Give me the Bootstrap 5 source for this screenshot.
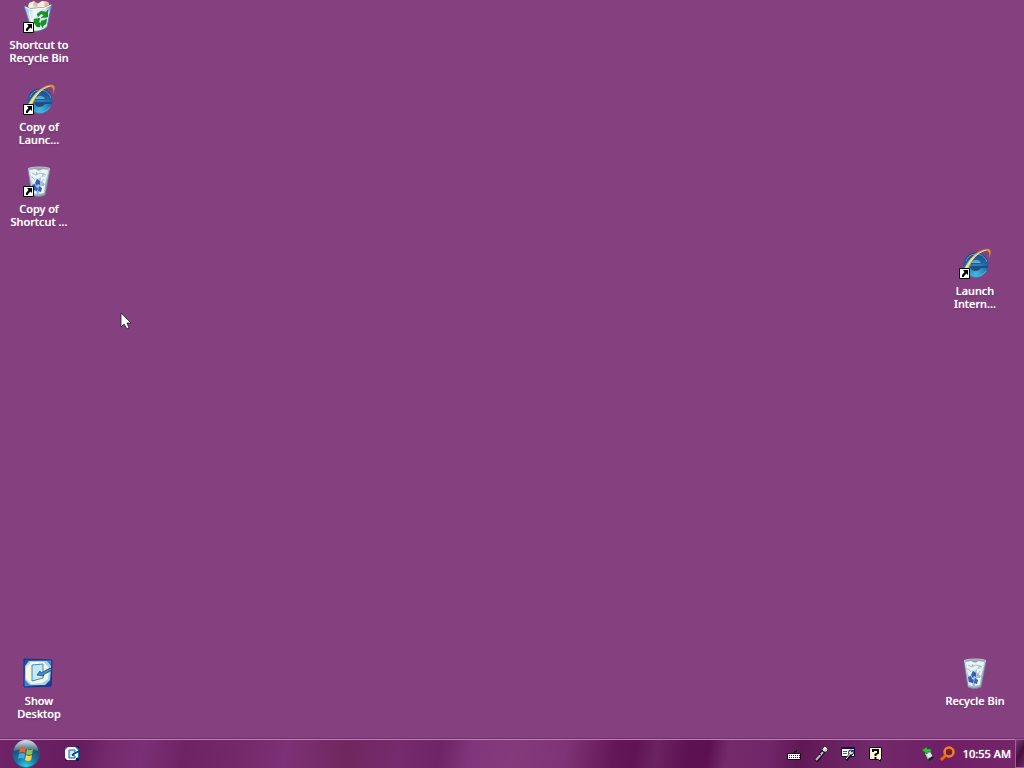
<!DOCTYPE html>
<html lang="en">
<head>
<meta charset="utf-8">
<meta name="viewport" content="width=device-width, initial-scale=1">
<title>Desktop</title>
<link href="https://cdn.jsdelivr.net/npm/bootstrap@5.3.0/dist/css/bootstrap.min.css" rel="stylesheet">
<style>
body { background: #85417f; font-family: "Noto Sans", "Open Sans", sans-serif; font-size: 11px; line-height: 13px; color: #fff; }
.desktop { display: grid; grid-template-columns: 78px 1fr 78px; grid-template-rows: repeat(9, minmax(0, 1fr)); padding-right: 10px; }
.shortcut { color: #fff; font-size: 11px; line-height: 13px; font-weight: 500; text-shadow: 0 0 1px #e8d5e8, 0 1px 2px #5b245b; }
.shortcut svg { width: 40px; height: 36px; }
.shortcut span { margin-top: 2px; }
.row-4 { grid-row: 4; }
.row-9 { grid-row: 9; }
.col-first { grid-column: 1; }
.col-last { grid-column: 3; }
.taskbar { height: 30px; border-top: 1px solid #713069; box-shadow: inset 0 1px #b981b6;
  background: linear-gradient(100deg, #702367 0%, #651d5e 8%, #762b6e 11%, #7a3075 14%, #6e2464 18%, #732869 23%, #7d3176 28%, #70275f 34%, #752b6d 39%, #6e2566 43%, #80367a 46%, #843b7c 50%, #7e3476 55%, #641758 60%, #601455 62%, #6b2362 64%, #5d1253 67%, #5c1052 69%, #742b6b 71%, #702668 75%, #601855 78%, #732a6c 85%, #701e66 92%, #742769 100%); }
.tray { gap: 11px; margin-right: 38px; }
.clock { text-shadow: 0 0 1px #e8d5e8; }
.peek { width: 9px; border: 1px solid #95658f; border-right: 0; background: linear-gradient(120deg, #793c73, #45103f 50%, #6b2662); }
.pointer { left: 120px; top: 312px; }
</style>
</head>
<body class="vh-100 d-flex flex-column overflow-hidden">

<svg width="0" height="0" class="position-absolute" aria-hidden="true">
  <defs>
    <linearGradient id="glass" x1="0" y1="0" x2="1" y2="1"><stop offset="0" stop-color="#d4e2e8"/><stop offset=".5" stop-color="#b4c9d8"/><stop offset="1" stop-color="#8496ac"/></linearGradient>
    <linearGradient id="binblue" x1="0" x2="1"><stop offset="0" stop-color="#8fb9d3"/><stop offset=".35" stop-color="#edf7f6"/><stop offset=".75" stop-color="#d6ebf1"/><stop offset="1" stop-color="#6687b8"/></linearGradient>
    <radialGradient id="globe" cx=".5" cy=".85" r=".9"><stop offset="0" stop-color="#42b9dd"/><stop offset=".5" stop-color="#2174b1"/><stop offset="1" stop-color="#173e79"/></radialGradient>
    <linearGradient id="gold" x1="0" y1="1" x2="1" y2="0"><stop offset="0" stop-color="#f5d35a"/><stop offset=".5" stop-color="#ecd287"/><stop offset="1" stop-color="#d88b2c"/></linearGradient>
    <radialGradient id="orb" cx=".5" cy="1" r="1"><stop offset="0" stop-color="#37dbef"/><stop offset=".4" stop-color="#137b9f"/><stop offset=".75" stop-color="#244d72"/><stop offset="1" stop-color="#6688a2"/></radialGradient>
    <linearGradient id="shine" x1="0" y1="0" x2="0" y2="1"><stop offset="0" stop-color="#dce4ec"/><stop offset="1" stop-color="#8da3b5" stop-opacity=".35"/></linearGradient>
    <linearGradient id="pad" x1="0" y1="0" x2="1" y2="1"><stop offset="0" stop-color="#1948a1"/><stop offset=".5" stop-color="#3f88d8"/><stop offset="1" stop-color="#102d87"/></linearGradient>
    <symbol id="arrow" viewBox="0 0 11 11">
      <path fill="#fff" stroke="#000" d="M.5.5h10v10H.5z"/>
      <path d="M4 2h5v5L7.500 5.500 5 8v1H3V7l2.500-3z"/>
    </symbol>
    <symbol id="bin" viewBox="0 0 40 36">
      <path fill="url(#glass)" stroke="#71849c" stroke-width=".7" d="M9 5l4 26q7 3 13 0l5-26z"/>
      <ellipse cx="20" cy="5" rx="11" ry="2" fill="#98a8b0" stroke="#c6d4da" stroke-width=".8"/>
      <path fill="#eaf3f5" d="M11 6l5-1 4 2 4-2 5 1-1 7-4-2-5 4-7-3zM12 14l4-1 2 5-4 2zM22 13l6-1-2 8-4-3zM20 23l6-2-1 8-5 1zM13 26l4 1 1 3-4-1z"/>
      <path stroke="#8fa6b8" stroke-width=".7" fill="none" d="M13 9l4 2 4-2 6 2M25 15l-3 4 3 3M13 13l3 3"/>
      <path fill="#9bbdd1" d="M17 8l2 1-2 2zM24 9l2 1-3 2zM20 16l2 2-3 1z"/>
      <path fill="#305fbb" d="M16 19l2-4 3 2v4l-2-1-1 2zM13 21l3-1 1 3 2 1-1 3-4-1zM20 22l3 2-1 4-3-1z"/>
    </symbol>
    <symbol id="binfull" viewBox="0 0 40 36">
      <path fill="#f8f0df" d="M9 7l1-4 5-2 3 3 5-3 6 1 2 6-19 2z"/>
      <path fill="#eab99c" d="M15 2l4 1-1 4-4-1zM26 1l4 2-2 5-3-2z"/>
      <path fill="url(#binblue)" stroke="#547aa9" stroke-width=".7" d="M5 6q6 4 12 2 9 1 16-4l-5 23q-6 5-15 4z"/>
      <path fill="none" stroke="#fff" d="M6 7q6 4 12 2 9 0 14-4M10 11l4 16M30 11l-3 15"/>
      <path fill="#169522" stroke="#087018" stroke-width=".3" d="M18 14l4-3 5 1 2-2v7l-7 1 3-3-3-1-3 3zM15 19l6-1-1 4 1 1v4h-3l-3-4zM23 21l5-2-1 5-3 2v2l-3-4 2-4z"/>
    </symbol>
    <symbol id="ie" viewBox="0 0 40 36">
      <circle cx="21" cy="19" r="12.500" fill="url(#globe)"/>
      <path fill="#315797" d="M14 17c1-6 12-7 14-1l-1 2H14z"/>
      <path fill="#56aed6" d="M16 17c1-4 9-4 10 0z"/>
      <path fill="#234c83" d="M15 20h18v2h-7q-2 3-6 3-4 0-5-5z"/>
      <path fill="none" stroke="#5bb9df" stroke-width=".8" d="M11 15c3-9 17-10 21 1M12 24c4 8 14 8 19 1"/>
      <path fill="url(#gold)" stroke="#a87631" stroke-width=".3" d="M6 32C8 21 18 5 31 3c5-1 6 3 3 9 1-5 0-8-5-7C20 7 12 22 12 29z"/>
      <path fill="none" stroke="#fff1b4" stroke-width=".8" d="M8 28C13 17 21 7 31 4"/>
    </symbol>
    <symbol id="showdesk" viewBox="0 0 30 30">
      <path fill="url(#pad)" stroke="#122d80" d="M1 1l28 1-1 26-27 1z"/>
      <path fill="#a9d2ef" d="M6 3h18l4 5-1 14-5 5H7l-5-5V8z"/>
      <path fill="#f7f8df" d="M8 4h13l5 6-1 11-6 4-11 1-5-5V9z"/>
      <path fill="#c7e8f7" stroke="#3d8cc8" d="M9 7l11-1v14l-11 3z"/>
      <path fill="#3c93cd" stroke="#183d64" stroke-width=".7" d="M14 17l3-4 1 2 9-5 2 2-9 5 1 1z"/>
    </symbol>
  </defs>
</svg>

<main class="desktop flex-fill position-relative">
  <button class="shortcut btn p-0 border-0 rounded-0 d-flex flex-column align-items-center col-first">
    <svg viewBox="0 0 40 36" aria-hidden="true"><use href="#binfull"/><use href="#arrow" x="4" y="22" width="11" height="11"/></svg>
    <span>Shortcut to<br>Recycle Bin</span>
  </button>
  <button class="shortcut btn p-0 border-0 rounded-0 d-flex flex-column align-items-center col-first">
    <svg viewBox="0 0 40 36" aria-hidden="true"><use href="#ie"/><use href="#arrow" x="4" y="22" width="11" height="11"/></svg>
    <span>Copy of<br>Launc...</span>
  </button>
  <button class="shortcut btn p-0 border-0 rounded-0 d-flex flex-column align-items-center col-first">
    <svg viewBox="0 0 40 36" aria-hidden="true"><use href="#bin"/><use href="#arrow" x="4" y="22" width="11" height="11"/></svg>
    <span>Copy of<br>Shortcut ...</span>
  </button>
  <button class="shortcut btn p-0 border-0 rounded-0 d-flex flex-column align-items-center row-4 col-last">
    <svg viewBox="0 0 40 36" aria-hidden="true"><use href="#ie"/><use href="#arrow" x="4" y="22" width="11" height="11"/></svg>
    <span>Launch<br>Intern...</span>
  </button>
  <button class="shortcut btn p-0 border-0 rounded-0 d-flex flex-column align-items-center row-9 col-first">
    <svg viewBox="0 0 40 36" aria-hidden="true"><use href="#showdesk" x="4" y="2" width="30" height="30"/></svg>
    <span>Show<br>Desktop</span>
  </button>
  <button class="shortcut btn p-0 border-0 rounded-0 d-flex flex-column align-items-center row-9 col-last">
    <svg viewBox="0 0 40 36" aria-hidden="true"><use href="#bin"/></svg>
    <span>Recycle Bin</span>
  </button>
  <svg class="pointer position-absolute" width="12" height="19" viewBox="0 0 12 19" aria-hidden="true"><path fill="#fff" stroke="#251537" stroke-width=".8" d="M1 1v14l3-3 3 5 2-1-2-5h4z"/></svg>
</main>

<footer class="taskbar d-flex align-items-center flex-shrink-0">
  <button class="btn p-0 border-0 d-flex ms-2 ps-1" aria-label="Start">
    <svg width="28" height="28" viewBox="0 0 28 28">
      <circle cx="14" cy="14" r="13.500" fill="url(#orb)" stroke="#304f71" stroke-width=".6"/>
      <path fill="url(#shine)" d="M2 11a12 11 0 0 1 24 0q-12-4-24 0z"/>
      <path fill="#e76424" d="M8 8q3-2 6 0l-1 5q-3-2-6 0z"/>
      <path fill="#8fc348" d="M15 9q3 2 6 0l-1 5q-3 2-6 0z"/>
      <path fill="#4ba6e5" d="M7 14q3-2 6 0l-1 5q-3-2-6 0z"/>
      <path fill="#ffd44b" d="M14 15q3 2 6 0l-1 5q-3 2-6 0z"/>
    </svg>
  </button>
  <button class="btn p-0 border-0 d-flex ms-4" aria-label="Show Desktop">
    <svg width="16" height="16" viewBox="0 0 16 16">
      <path fill="#1670bd" d="M1 2l2-1h12v13H1z"/>
      <path fill="#fff" d="M4 1h7l3 3v7l-3 3H3l-2-2V4z"/>
      <path fill="#c6eaff" stroke="#0b62a4" d="M5 4h6v3L8 9l3 1v2H5z"/>
      <path stroke="#123d66" stroke-width="1.500" d="M8 9l7-4"/>
      <path fill="#10204b" d="M12 0h3v3zM12 12h3v3h-3zM1 12l2 3H1z"/>
    </svg>
  </button>
  <div class="tray d-flex align-items-center ms-auto">
    <button class="btn p-0 border-0 d-flex" aria-label="Keyboard">
      <svg width="16" height="18" viewBox="0 0 16 18"><path fill="#fff" stroke="#17051c" d="M1.500 8.500h13v6h-13z"/><path stroke="#272230" stroke-dasharray="1 1" d="M3 10.500h11M3 12.500h11"/><path stroke="#17051c" fill="none" d="M8.500 8V6.500h2V5"/></svg>
    </button>
    <button class="btn p-0 border-0 d-flex" aria-label="Microphone">
      <svg width="16" height="18" viewBox="0 0 16 18"><path stroke="#1c0c20" stroke-width="4" d="M3 16l8-10"/><path stroke="#c3b5c2" stroke-width="2" d="M3 15l8-9"/><circle cx="12" cy="4.500" r="2.800" fill="#ddd4cf" stroke="#38263c"/><path fill="#fff" d="M11 2h2v2h-2z"/><path stroke="#221527" d="M9 6l3 2M6 9l2 1"/></svg>
    </button>
    <button class="btn p-0 border-0 d-flex" aria-label="Tools">
      <svg width="16" height="18" viewBox="0 0 16 18"><path fill="#fff" stroke="#09093c" d="M1.500 2.500h13v9h-13z"/><path fill="#090d66" d="M1 2h14v2H1z"/><path stroke="#53546d" d="M3 6.500h4M3 8.500h4"/><path fill="none" stroke="#101015" stroke-width="3.500" d="M6 15l5-6"/><circle cx="11" cy="7.500" r="2.500" fill="#ddd" stroke="#111"/><path stroke="#fff" d="M6 14l5-6"/><path stroke="#111" d="M11 7l3-2"/></svg>
    </button>
    <button class="btn p-0 border-0 d-flex" aria-label="Help">
      <svg width="16" height="18" viewBox="0 0 16 18"><path fill="#fffbd9" stroke="#17051c" d="M2.500 2.500h12v12h-1v2l-2-2h-9z"/><path fill="none" stroke="#080808" stroke-width="2" d="M6 7V5h5v3L8.500 9.500V11M8.500 12v2"/></svg>
    </button>
  </div>
  <button class="btn p-0 border-0 d-flex me-1" aria-label="Safely remove hardware">
    <svg width="14" height="16" viewBox="0 0 14 16"><path fill="#a4adb0" stroke="#333c44" d="M3 7l6-3 4 8-6 3z"/><path fill="#e6e9e7" d="M5 8l4-2 2 4-4 2z"/><path fill="#35c23d" stroke="#137325" stroke-width=".6" d="M1 4l5-3v2h4v3H6v2z"/><path fill="#181e27" d="M7 13l5-3 1 2-5 3z"/></svg>
  </button>
  <button class="btn p-0 border-0 d-flex me-2" aria-label="Search">
    <svg width="16" height="16" viewBox="0 0 16 16"><circle cx="10" cy="6" r="4.500" fill="#6e1c50" stroke="#f48314" stroke-width="2.500"/><path stroke="#e96b0b" stroke-width="3" d="M7 9l-5 5"/></svg>
  </button>
  <time class="clock fw-medium text-nowrap me-1" datetime="10:55">10:55 AM</time>
  <button class="peek btn p-0 rounded-0 align-self-stretch" aria-label="Peek at desktop"></button>
</footer>

<script src="https://cdn.jsdelivr.net/npm/bootstrap@5.3.0/dist/js/bootstrap.bundle.min.js"></script>
</body>
</html>
